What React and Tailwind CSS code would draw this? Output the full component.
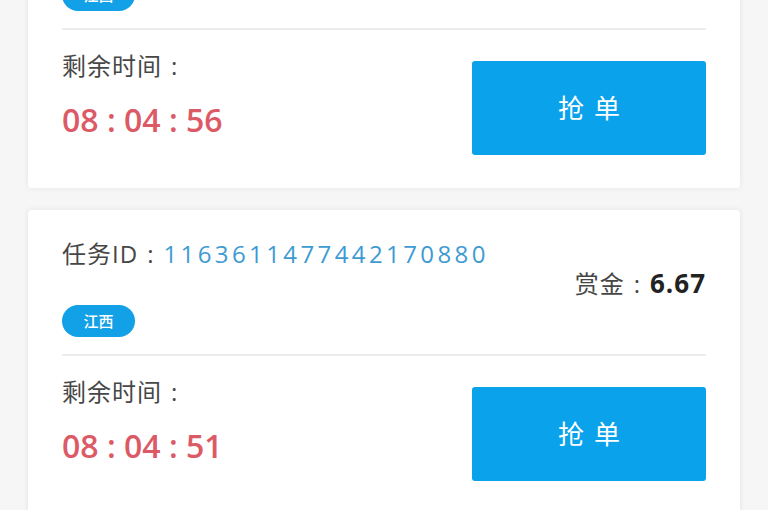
const tasks = [
  { id: '1163611477442170879', region: '江西', reward: '6.67', time: '08 : 04 : 56' },
  { id: '1163611477442170880', region: '江西', reward: '6.67', time: '08 : 04 : 51' },
];

const font = { fontFamily: '"Open Sans", "Noto Sans CJK SC", sans-serif' };

function Colon() {
  return <span className="inline-block px-[9px]">:</span>;
}

function TaskCard({ task }) {
  return (
    <div className="bg-white mx-[28px] rounded-[4px] shadow-[0_0_6px_rgba(0,0,0,0.08)] px-[34px]">
      {/* Header */}
      <div className="flex items-center justify-between pt-[28px] pb-[17px]">
        <div>
          <p className="text-[24px] leading-[32px] text-[#474747] tracking-[1px] whitespace-nowrap">
            任务ID<Colon />
            <span className="text-[#3d9bd2] tracking-[3.4px]">{task.id}</span>
          </p>
          <span className="mt-[35px] inline-flex items-center justify-center w-[73px] h-[32px] rounded-full bg-[#12a0e6] text-white text-[15px] font-medium">
            {task.region}
          </span>
        </div>
        <p className="text-[24px] leading-[32px] text-[#474747] tracking-[1px] -mt-[8px] whitespace-nowrap">
          赏金<Colon />
          <span className="text-[26px] font-bold text-[#222]">{task.reward}</span>
        </p>
      </div>

      <div className="h-[2px] bg-[#ececec]" />

      {/* Footer */}
      <div className="flex justify-between pt-[20px] pb-[33px]">
        <div>
          <p className="text-[24px] leading-[32px] text-[#474747] tracking-[1px]">
            剩余时间<Colon />
          </p>
          <p className="mt-[18px] text-[32px] leading-[40px] font-semibold text-[#dc5a66] whitespace-nowrap">
            {task.time}
          </p>
        </div>
        <button className="mt-[11px] w-[234px] h-[94px] bg-[#0aa2ea] rounded-[3px] text-white text-[26px] tracking-[10px] pl-[10px]">
          抢单
        </button>
      </div>
    </div>
  );
}

export default function App() {
  return (
    <div className="w-[768px] h-[510px] overflow-hidden bg-[#f6f6f6]" style={font}>
      <div className="-mt-[116px] flex flex-col gap-[22px]">
        {tasks.map((t) => (
          <TaskCard key={t.id} task={t} />
        ))}
      </div>
    </div>
  );
}
